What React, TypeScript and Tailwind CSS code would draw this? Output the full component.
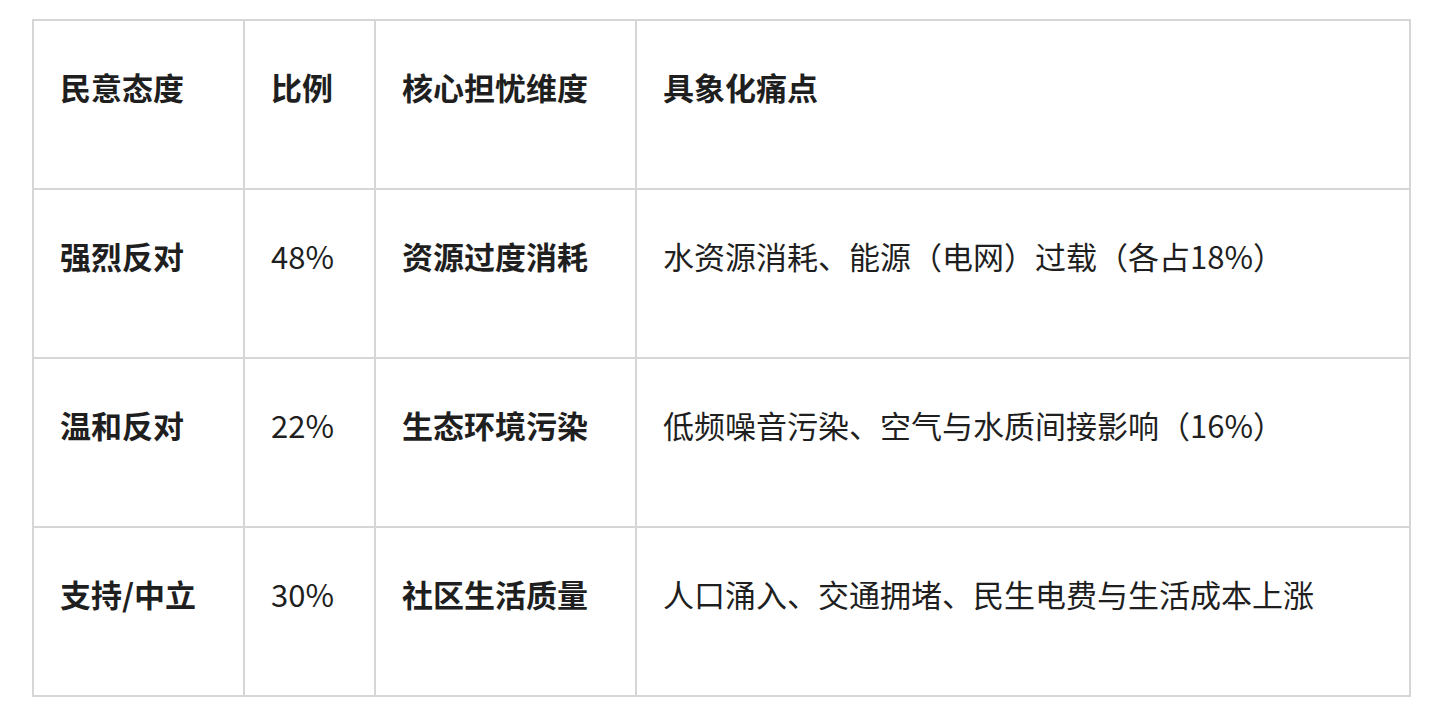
import React from 'react';

const rows = [
  { attitude: '强烈反对', ratio: '48%', dimension: '资源过度消耗', pain: '水资源消耗、能源（电网）过载（各占18%）' },
  { attitude: '温和反对', ratio: '22%', dimension: '生态环境污染', pain: '低频噪音污染、空气与水质间接影响（16%）' },
  { attitude: '支持/中立', ratio: '30%', dimension: '社区生活质量', pain: '人口涌入、交通拥堵、民生电费与生活成本上涨' },
];

const cell = 'border-2 border-[#d6d6d6] align-top pl-[26px] pt-[43px] leading-[46px]';

export default function App() {
  return (
    <div
      className="min-h-[720px] bg-white pt-[19px] pl-[32px] text-[31px] text-[#1f1f1f]"
      style={{ fontFamily: '"Noto Sans CJK SC", "Noto Sans", sans-serif' }}
    >
      <table className="border-collapse w-[1379px] table-fixed">
        <colgroup>
          <col className="w-[211px]" />
          <col className="w-[131px]" />
          <col className="w-[261px]" />
          <col />
        </colgroup>
        <thead>
          <tr className="h-[169px]">
            <th className={`${cell} text-left font-bold`}>民意态度</th>
            <th className={`${cell} text-left font-bold`}>比例</th>
            <th className={`${cell} text-left font-bold`}>核心担忧维度</th>
            <th className={`${cell} text-left font-bold`}>具象化痛点</th>
          </tr>
        </thead>
        <tbody>
          {rows.map((r) => (
            <tr key={r.attitude} className="h-[169px]">
              <td className={`${cell} font-bold`}>{r.attitude}</td>
              <td className={cell}>{r.ratio}</td>
              <td className={`${cell} font-bold`}>{r.dimension}</td>
              <td className={cell}>{r.pain}</td>
            </tr>
          ))}
        </tbody>
      </table>
    </div>
  );
}
